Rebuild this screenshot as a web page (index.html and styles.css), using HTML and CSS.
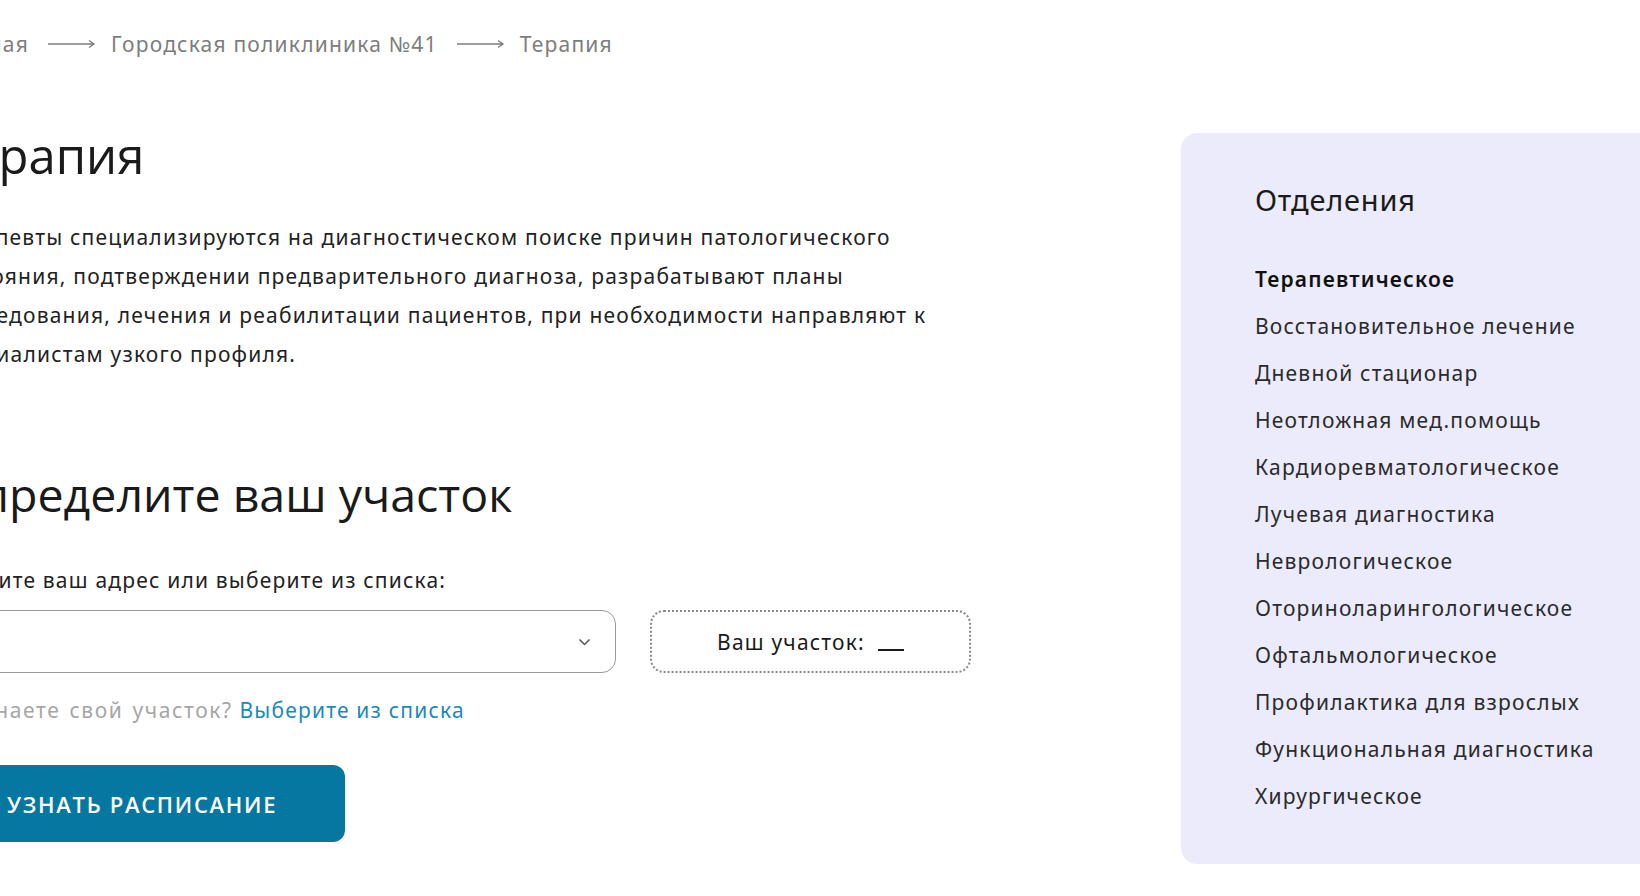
FILE: index.html
```html
<!DOCTYPE html>
<html lang="ru">
<head>
<meta charset="utf-8">
<title>Терапия</title>
<link rel="stylesheet" href="styles.css">
</head>
<body>
<div class="page">
  <nav class="crumbs">
    <a class="crumb" href="#">Главная</a>
    <svg class="crumb-arrow" width="48" height="10" viewBox="0 0 48 10"><path d="M0 5H46M41 1.5L46 5L41 8.5" fill="none" stroke="#7d7d7d" stroke-width="1.3"/></svg>
    <a class="crumb" href="#">Городская поликлиника №41</a>
    <svg class="crumb-arrow" width="48" height="10" viewBox="0 0 48 10"><path d="M0 5H46M41 1.5L46 5L41 8.5" fill="none" stroke="#7d7d7d" stroke-width="1.3"/></svg>
    <span class="crumb">Терапия</span>
  </nav>
  <div class="content">
    <main class="main">
      <h1 class="title">Терапия</h1>
      <p class="lead">Терапевты специализируются на диагностическом поиске причин патологического состояния, подтверждении предварительного диагноза, разрабатывают планы обследования, лечения и реабилитации пациентов, при необходимости направляют к специалистам узкого профиля.</p>
      <h2 class="subtitle">Определите ваш участок</h2>
      <div class="label">Введите ваш адрес или выберите из списка:</div>
      <div class="form-row">
        <div class="select">
          <svg class="chev" width="13" height="8" viewBox="0 0 13 8"><path d="M1.5 1.5L6.5 6.5L11.5 1.5" fill="none" stroke="#555" stroke-width="1.5"/></svg>
        </div>
        <div class="district">Ваш участок: <span class="blank"></span></div>
      </div>
      <div class="hint"><span class="hint-text">Не знаете свой участок?</span> <a class="hint-link" href="#">Выберите из списка</a></div>
      <button class="btn">УЗНАТЬ РАСПИСАНИЕ</button>
    </main>
    <aside class="side">
      <h3 class="side-title">Отделения</h3>
      <ul class="side-list">
        <li class="side-item active">Терапевтическое</li>
        <li class="side-item">Восстановительное лечение</li>
        <li class="side-item">Дневной стационар</li>
        <li class="side-item">Неотложная мед.помощь</li>
        <li class="side-item">Кардиоревматологическое</li>
        <li class="side-item">Лучевая диагностика</li>
        <li class="side-item">Неврологическое</li>
        <li class="side-item">Оториноларингологическое</li>
        <li class="side-item">Офтальмологическое</li>
        <li class="side-item">Профилактика для взрослых</li>
        <li class="side-item">Функциональная диагностика</li>
        <li class="side-item">Хирургическое</li>
      </ul>
    </aside>
  </div>
</div>
</body>
</html>
```

FILE: styles.css
```css
html, body {
  margin: 0;
  padding: 0;
  background: #fff;
  overflow: hidden;
}
body {
  width: 1640px;
  height: 896px;
  font-family: "Noto Sans", "Open Sans", sans-serif;
  color: #222;
}
.page {
  margin-left: -56px;
  width: 1760px;
}
.crumbs {
  display: flex;
  align-items: center;
  margin-left: -6px;
  padding-top: 32px;
  height: 24px;
  font-size: 21px;
  letter-spacing: 1.2px;
  line-height: 24px;
  color: #7d7d7d;
}
.crumb {
  color: #7d7d7d;
  text-decoration: none;
}
.crumb-arrow {
  display: block;
  margin: 0 15px 0 19px;
}
.content {
  display: grid;
  grid-template-columns: 1237px 520px;
  margin-top: 70px;
  align-items: start;
}
.main {
  display: flex;
  flex-direction: column;
  align-items: flex-start;
}
.title {
  margin: 0;
  font-family: "Open Sans", sans-serif;
  font-weight: 400;
  font-size: 49px;
  line-height: 58px;
  color: #1a1a1a;
}
.lead {
  margin: 34px 0 0;
  max-width: 1010px;
  font-size: 21px;
  letter-spacing: 1.2px;
  line-height: 39px;
  color: #222;
}
.subtitle {
  margin: 92px 0 0;
  font-family: "Open Sans", sans-serif;
  font-weight: 400;
  font-size: 46.5px;
  line-height: 56px;
  color: #1a1a1a;
}
.label {
  margin-top: 44px;
  font-size: 21px;
  letter-spacing: 1.2px;
  line-height: 28px;
}
.form-row {
  display: flex;
  gap: 34px;
  margin-top: 16px;
}
.select {
  width: 672px;
  height: 63px;
  box-sizing: border-box;
  border: 1.5px solid #9a9a9a;
  border-radius: 14px;
  display: flex;
  align-items: center;
  justify-content: flex-end;
  padding-right: 24px;
}
.chev {
  display: block;
}
.district {
  width: 321px;
  height: 63px;
  box-sizing: border-box;
  border: 2px dotted #8a8a8a;
  border-radius: 14px;
  display: flex;
  align-items: center;
  justify-content: center;
  gap: 13px;
  font-size: 21px;
  letter-spacing: 1.2px;
  color: #1a1a1a;
}
.blank {
  display: inline-block;
  width: 26px;
  height: 2px;
  background: #1a1a1a;
  margin-top: 16px;
}
.hint {
  margin-top: 23px;
  font-size: 21px;
  letter-spacing: 1.2px;
  line-height: 28px;
  color: #a6a6a6;
}
.hint-text {
  letter-spacing: 1.6px;
  word-spacing: 2px;
}
.hint-link {
  color: #1a8ab8;
  text-decoration: none;
}
.btn {
  margin-top: 41px;
  width: 401px;
  height: 77px;
  border: none;
  border-radius: 12px;
  background: #0577a1;
  color: #fff;
  font-family: "Open Sans", sans-serif;
  font-weight: 600;
  font-size: 22px;
  letter-spacing: 1.7px;
  text-align: left;
  padding: 0 0 0 63px;
  cursor: pointer;
}
.side {
  margin-top: 7px;
  background: #ebebfc;
  border-radius: 16px 0 0 16px;
  height: 731px;
  box-sizing: border-box;
  padding: 49px 0 0 74px;
}
.side-title {
  margin: 0;
  font-weight: 400;
  font-size: 29px;
  letter-spacing: 0.8px;
  line-height: 36px;
  color: #1a1a1a;
}
.side-list {
  list-style: none;
  margin: 46px 0 0;
  padding: 0;
  display: flex;
  flex-direction: column;
  gap: 17px;
}
.side-item {
  font-size: 21px;
  letter-spacing: 1.2px;
  line-height: 30px;
  color: #2a2a2a;
}
.side-item.active {
  font-weight: 600;
  color: #111;
}
```
